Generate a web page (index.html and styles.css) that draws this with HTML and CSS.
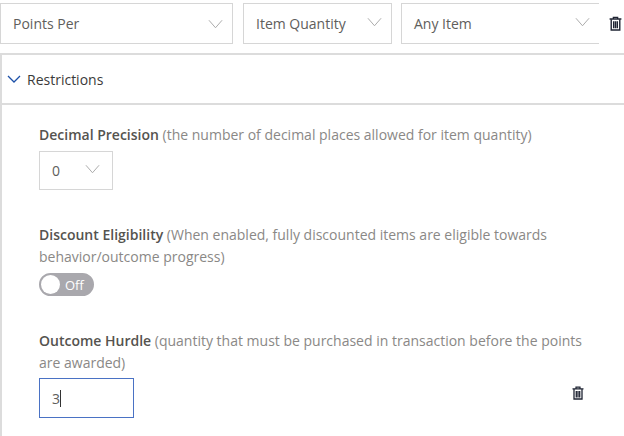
FILE: index.html
```html
<!DOCTYPE html>
<html lang="en">
<head>
    <meta charset="UTF-8">
    <title>Restrictions</title>
    <link rel="stylesheet" href="styles.css">
</head>
<body>

<div class="top-row">
    <div class="select select-points"><span>Points Per</span>
        <svg class="chev chev-low" viewBox="0 0 16 10"><path d="M1 1l7 8 7-8"/></svg>
    </div>
    <div class="select select-qty"><span>Item Quantity</span>
        <svg class="chev" viewBox="0 0 16 10"><path d="M1 1l7 8 7-8"/></svg>
    </div>
    <div class="select select-item"><span>Any Item</span>
        <svg class="chev" viewBox="0 0 16 10"><path d="M1 1l7 8 7-8"/></svg>
    </div>
    <svg class="trash" viewBox="0 0 12 14">
        <path class="trash-lid" d="M4 2.5V1.2h4v1.3M.5 2.8h11"/>
        <path class="trash-can" d="M2 3v10h8V3M4.3 5v6.5M6 5v6.5M7.7 5v6.5"/>
    </svg>
</div>

<div class="panel">
    <div class="panel-head">
        <svg class="chev-blue" viewBox="0 0 14 8"><path d="M1 1l6 6 6-6"/></svg>
        <span>Restrictions</span>
    </div>

    <div class="panel-body">
        <div class="field field-decimal">
            <div class="label"><b>Decimal Precision</b> <span>(the number of decimal places allowed for item quantity)</span></div>
            <div class="select select-small"><span>0</span>
                <svg class="chev" viewBox="0 0 16 10"><path d="M1 1l7 8 7-8"/></svg>
            </div>
        </div>

        <div class="field field-discount">
            <div class="label"><b>Discount Eligibility</b> <span>(When enabled, fully discounted items are eligible towards</span></div>
            <div class="label label-more">behavior/outcome progress)</div>
            <div class="toggle"><span class="knob"></span><span class="toggle-text">Off</span></div>
        </div>

        <div class="field field-hurdle">
            <div class="label"><b>Outcome Hurdle</b> <span>(quantity that must be purchased in transaction before the points</span></div>
            <div class="label label-tight">are awarded)</div>
            <div class="hurdle-row">
                <div class="text-input">3<span class="caret"></span></div>
                <svg class="trash trash-small" viewBox="0 0 12 14">
                    <path class="trash-lid" d="M4 2.5V1.2h4v1.3M.5 2.8h11"/>
                    <path class="trash-can" d="M2 3v10h8V3M4.3 5v6.5M6 5v6.5M7.7 5v6.5"/>
                </svg>
            </div>
        </div>
    </div>
</div>

</body>
</html>
```

FILE: styles.css
```css
html, body {
    height: 100%;
}

body {
    margin: 0;
    background-color: white;
    color: #605e5c;
    font-family: "Open Sans", "Noto Sans", Arial, sans-serif;
    font-size: 14px;
    overflow: hidden;
}

.top-row {
    display: flex;
    align-items: center;
    height: 53px;
    padding-top: 3px;
    padding-bottom: 9px;
    box-sizing: border-box;
}

.select {
    display: flex;
    align-items: center;
    justify-content: space-between;
    height: 41px;
    border: 1px solid #d6d6d6;
    box-sizing: border-box;
    padding: 0 9px 0 12px;
    color: #605e5c;
}

.select-points {
    width: 233px;
    margin-right: 10px;
}

.select-qty {
    width: 149px;
    margin-right: 9px;
}

.select-item {
    width: 198px;
    border-right: none;
    padding-right: 9px;
}

.select-small {
    width: 74px;
    height: 39px;
    padding-right: 12px;
}

.chev {
    width: 15px;
    height: 10px;
    margin-bottom: 3px;
    fill: none;
    stroke: #a6a6a6;
    stroke-width: 1;
}

.chev-low {
    margin-bottom: 0;
}

.trash {
    width: 13px;
    height: 15px;
    margin-left: 10px;
    fill: none;
    flex-shrink: 0;
}

.trash-lid {
    stroke: #1f2433;
    stroke-width: 1.2;
}

.trash-can {
    stroke: #1f2433;
    stroke-width: 1.3;
}

.panel {
    border-top: 2px solid #dcdcdc;
    border-left: 2px solid #dcdcdc;
    height: 383px;
    box-sizing: border-box;
}

.panel-head {
    display: flex;
    align-items: center;
    height: 48px;
    padding-left: 5px;
    border-bottom: 2px solid #dcdcdc;
    color: #3b3a39;
}

.chev-blue {
    width: 14px;
    height: 8px;
    margin-right: 6px;
    fill: none;
    stroke: #1c50a8;
    stroke-width: 1.3;
}

.panel-body {
    padding-left: 37px;
}

.field-decimal {
    padding-top: 19px;
}

.field-discount {
    padding-top: 34px;
}

.field-hurdle {
    padding-top: 34px;
}

.label {
    margin: 0 0 5px 0;
    line-height: 22px;
    color: #8a8886;
    white-space: nowrap;
}

.label b {
    font-weight: 600;
    color: #55534f;
}

.label-tight {
    margin-bottom: 4px;
}

.field-discount .label:first-child,
.field-hurdle .label:first-child {
    margin-bottom: 0;
}

.toggle {
    display: flex;
    align-items: center;
    width: 55px;
    height: 23px;
    border-radius: 12px;
    background-color: #a9a8ad;
    border: 2px solid #a9a8ad;
    box-sizing: border-box;
}

.knob {
    width: 19px;
    height: 19px;
    border-radius: 50%;
    background-color: white;
}

.toggle-text {
    margin-left: 5px;
    font-size: 13px;
    color: white;
}

.hurdle-row {
    display: flex;
    align-items: center;
}

.text-input {
    display: flex;
    align-items: center;
    width: 95px;
    height: 40px;
    padding-left: 12px;
    border: 1px solid #4a72c4;
    box-sizing: border-box;
}

.caret {
    width: 1px;
    height: 17px;
    background-color: #333;
}

.trash-small {
    margin-left: 438px;
    margin-bottom: 10px;
    width: 12px;
    height: 14px;
}
```
